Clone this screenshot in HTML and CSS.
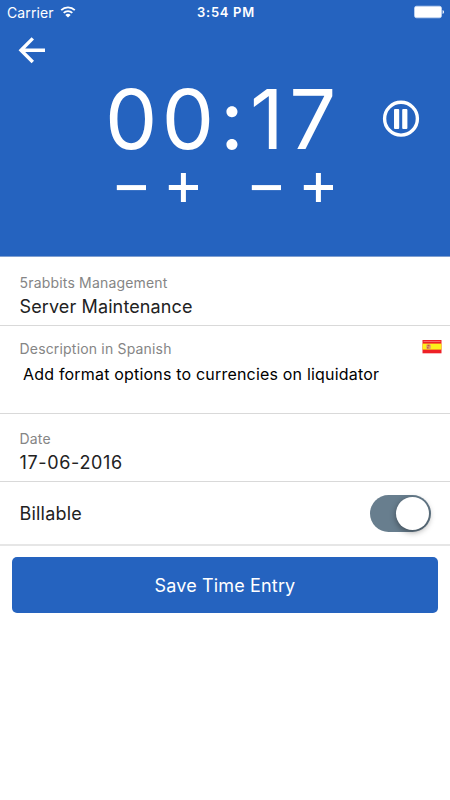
FILE: index.html
```html
<!DOCTYPE html>
<html lang="en">
<head>
    <meta charset="UTF-8">
    <meta name="viewport" content="width=device-width, initial-scale=1.0">
    <title>Time Entry</title>
    <link rel="stylesheet" href="styles.css">
</head>
<body>
    <header class="header">
        <div class="status">
            <div class="carrier">
                <span>Carrier</span>
                <svg class="wifi" width="16" height="12" viewBox="0 0 16 12">
                    <path d="M1.2 4.2a9.6 9.6 0 0 1 13.6 0M3.7 6.9a6 6 0 0 1 8.6 0" fill="none" stroke="#fff" stroke-width="1.8"/>
                    <path d="M8 11.6L5.3 9a3.8 3.8 0 0 1 5.4 0z" fill="#fff"/>
                </svg>
            </div>
            <div class="clock">3:54 PM</div>
            <svg class="battery" width="31" height="14" viewBox="0 0 31 14">
                <rect x=".5" y="1.2" width="27" height="11.6" rx="2" fill="#fff" stroke="#c3d5f1" stroke-width=".8"/>
                <path d="M28.6 5.1q1.4.7 1.4 2t-1.4 2z" fill="#fff"/>
            </svg>
        </div>
        <a class="back" href="#">
            <svg width="28" height="28" viewBox="0 0 28 28">
                <path d="M14.8 2.4L3 14.2L14.8 26M3.5 14.2h23.5" fill="none" stroke="#fff" stroke-width="3.4"/>
            </svg>
        </a>
        <div class="timer">
            <div class="time"><span class="hours">00</span><span class="colon">:</span><span class="minutes">17</span></div>
            <svg class="pause" width="38" height="38" viewBox="0 0 38 38">
                <circle cx="19" cy="18.7" r="16.4" fill="none" stroke="#fff" stroke-width="3.4"/>
                <rect x="12" y="9" width="5.2" height="20" rx="1" fill="#fff"/>
                <rect x="20.2" y="9" width="5.2" height="20" rx="1" fill="#fff"/>
            </svg>
        </div>
        <div class="steps">
            <div class="step-pair">
                <svg width="30" height="30" viewBox="0 0 30 30"><path d="M.8 15.6h29.2" stroke="#fff" stroke-width="5"/></svg>
                <svg width="30" height="30" viewBox="0 0 30 30"><path d="M.8 15.5h29.2M15.4.9V30" stroke="#fff" stroke-width="5"/></svg>
            </div>
            <div class="step-pair">
                <svg width="30" height="30" viewBox="0 0 30 30"><path d="M.8 15.6h29.2" stroke="#fff" stroke-width="5"/></svg>
                <svg width="30" height="30" viewBox="0 0 30 30"><path d="M.8 15.5h29.2M15.4.9V30" stroke="#fff" stroke-width="5"/></svg>
            </div>
        </div>
    </header>
    <main>
        <div class="row project">
            <div class="label">5rabbits Management</div>
            <div class="value project-value">Server Maintenance</div>
        </div>
        <div class="row description">
            <div class="label-line">
                <div class="label">Description in Spanish</div>
                <svg class="flag" width="20" height="14" viewBox="0 0 20 14">
                    <rect x=".5" width="19" height="13.3" fill="#ee2026"/>
                    <rect x="1.5" y="1" width="17" height="1" fill="#f4666a"/>
                    <rect x=".5" y="3.6" width="19" height="6" fill="#fdf01c"/>
                    <rect x="4.3" y="4.6" width="4.5" height="4.4" rx="1" fill="#dda06c"/>
                    <path d="M5.5 4.8h2v1.5h-2zM5.2 7h1.2v1.5H5.2z" fill="#c9504c"/>
                </svg>
            </div>
            <div class="desc-text">Add format options to currencies on liquidator</div>
        </div>
        <div class="row date">
            <div class="label">Date</div>
            <div class="value date-value">17-06-2016</div>
        </div>
        <div class="row billable">
            <div class="value billable-value">Billable</div>
            <div class="toggle"><div class="knob"></div></div>
        </div>
        <button type="button" class="btn-save">Save Time Entry</button>
    </main>
</body>
</html>
```
FILE: styles.css
```css
* {
    box-sizing: border-box;
}
body {
    margin: 0;
    background: #fff;
    font-family: Inter, "Liberation Sans", sans-serif;
    color: #222;
}
.header {
    height: 257px;
    background: #2563bf;
    border-bottom: 1px solid #7f9fd0;
    color: #fff;
}
.status {
    display: grid;
    grid-template-columns: 1fr auto 1fr;
    align-items: center;
    height: 24px;
    padding: 0 5px 0 7px;
    font-size: 14px;
}
.carrier {
    display: flex;
    align-items: center;
    gap: 6px;
    letter-spacing: 0.1px;
}
.clock {
    font-size: 13px;
    font-weight: 600;
    letter-spacing: 0.7px;
}
.battery {
    justify-self: end;
}
.back {
    display: block;
    width: 28px;
    height: 28px;
    margin: 12px 0 0 18px;
}
.back svg, .pause, .steps svg, .flag {
    display: block;
}
.timer {
    display: flex;
    align-items: center;
    height: 80px;
    margin-top: 15px;
    padding-left: 105px;
}
.time {
    display: flex;
    width: 277px;
    font-size: 83px;
    line-height: 80px;
}
.hours {
    width: 115px;
    letter-spacing: 4.5px;
}
.colon {
    width: 30px;
}
.minutes {
    letter-spacing: 5.5px;
}
.steps {
    display: flex;
    gap: 53px;
    margin: 13px 0 0 116px;
}
.step-pair {
    display: flex;
    gap: 22px;
}
.row {
    padding: 0 8px 0 19.5px;
    border-bottom: 1px solid #d9d9d9;
}
.label {
    font-size: 14px;
    line-height: 18px;
    color: #858585;
    letter-spacing: 0.18px;
}
.value {
    font-size: 18px;
    line-height: 24px;
    letter-spacing: 0.12px;
}
.project {
    height: 69px;
    padding-top: 17px;
}
.project-value {
    margin-top: 3px;
}
.description {
    height: 88px;
    padding-top: 14px;
}
.label-line {
    display: flex;
    justify-content: space-between;
}
.desc-text {
    margin: 5px 0 0 3.5px;
    font-size: 16px;
    line-height: 22px;
    color: #000;
    letter-spacing: 0.19px;
    white-space: nowrap;
}
.date {
    height: 68px;
    padding-top: 16px;
}
.date-value {
    margin-top: 3px;
    letter-spacing: 0.65px;
}
.billable {
    display: flex;
    align-items: center;
    justify-content: space-between;
    height: 64px;
    padding-right: 19px;
    border-bottom-width: 2px;
    border-color: #e6e6e6;
}
.billable-value {
    padding-top: 2px;
    letter-spacing: 0.2px;
}
.toggle {
    display: flex;
    justify-content: flex-end;
    width: 61px;
    height: 37px;
    padding: 2px;
    border-radius: 19px;
    background: #687e8e;
}
.knob {
    width: 33px;
    height: 33px;
    border-radius: 50%;
    background: #fff;
    box-shadow: 0 2px 6px rgba(0, 0, 0, 0.4);
}
.btn-save {
    display: block;
    width: 426px;
    height: 56px;
    margin: 11px auto 0;
    border: none;
    border-radius: 5px;
    background: #2563bf;
    color: #fff;
    font-family: inherit;
    font-size: 18px;
    letter-spacing: 0.15px;
}
```
